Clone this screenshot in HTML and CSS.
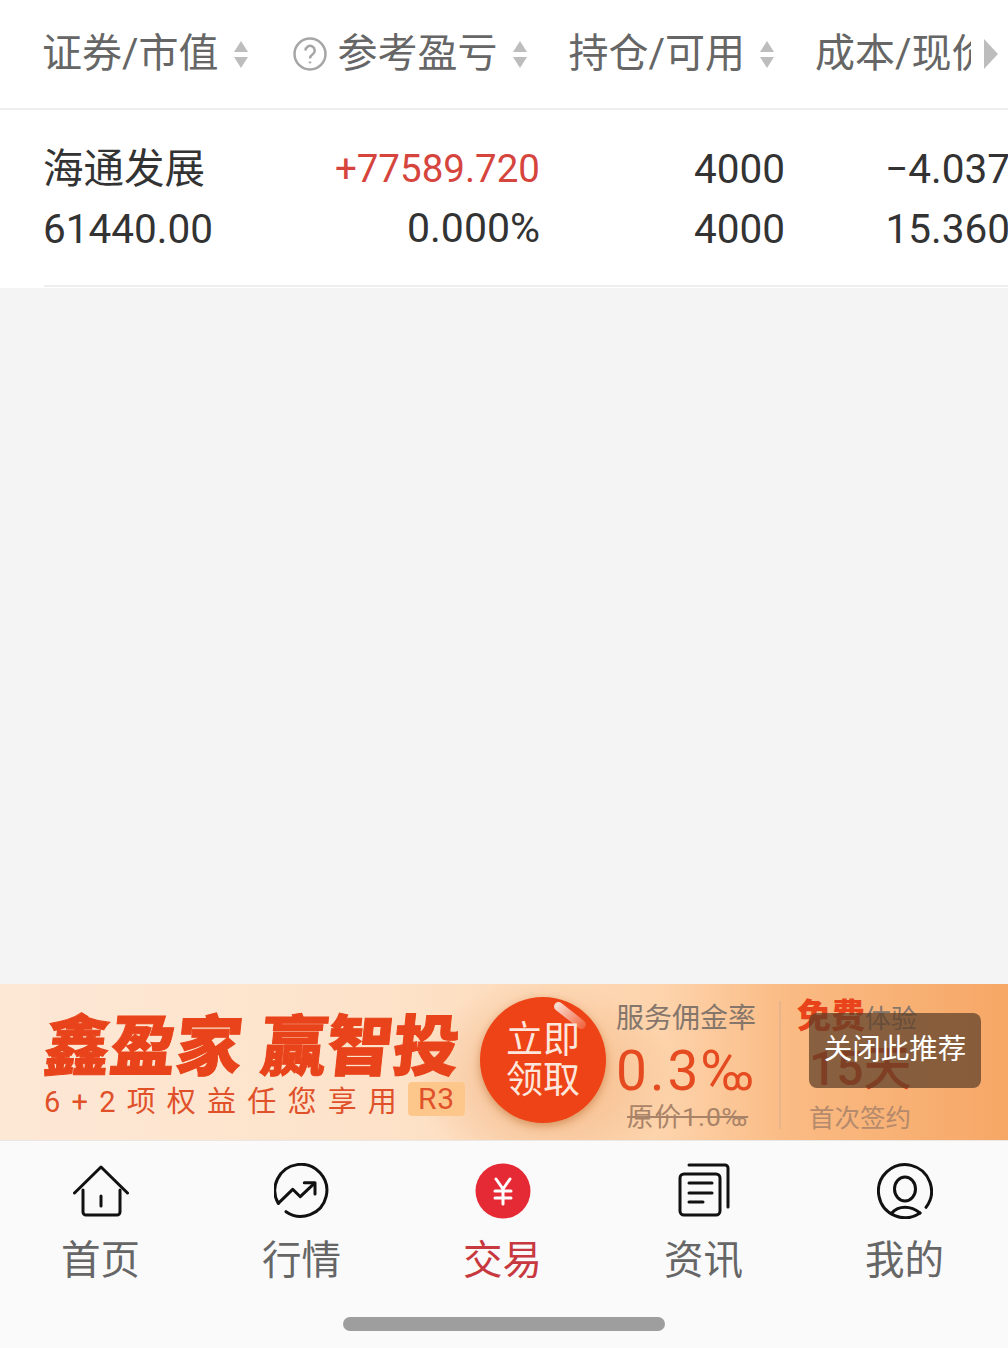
FILE: index.html
```html
<!DOCTYPE html>
<html>
    <head>
        <title>持仓</title>
        <link rel="stylesheet" href="styles.css">
    </head>
    <body>
        <div class="page">
            <div class="table_head">
                <div class="th th_name">
                    <span class="th_label">证券/市值</span>
                    <span class="sort"><i class="up"></i><i class="down"></i></span>
                </div>
                <div class="th th_profit">
                    <svg class="help" viewBox="0 0 34 34">
                        <circle cx="17" cy="17" r="15.5" />
                        <path d="M12.5 13.5 a4.6 4.6 0 1 1 7.2 3.8 c-1.800 1.200 -2.700 2.200 -2.700 4.200" />
                        <path d="M17 24.500 v1.800" />
                    </svg>
                    <span class="th_label">参考盈亏</span>
                    <span class="sort"><i class="up"></i><i class="down"></i></span>
                </div>
                <div class="th th_hold">
                    <span class="th_label">持仓/可用</span>
                    <span class="sort"><i class="up"></i><i class="down"></i></span>
                </div>
                <div class="th th_cost">
                    <span class="th_label th_clip">成本/现价</span>
                    <i class="more"></i>
                </div>
            </div>

            <div class="row">
                <div class="row_grid">
                    <div class="cell">
                        <div class="line">海通发展</div>
                        <div class="line">61440.00</div>
                    </div>
                    <div class="cell num">
                        <div class="line up_value">+77589.720</div>
                        <div class="line pct">0.000%</div>
                    </div>
                    <div class="cell num">
                        <div class="line">4000</div>
                        <div class="line">4000</div>
                    </div>
                    <div class="cell num">
                        <div class="line">−4.037</div>
                        <div class="line">15.360</div>
                    </div>
                </div>
                <div class="row_rule"></div>
            </div>

            <div class="blank"></div>

            <div class="banner">
                <div class="promo">
                    <div class="promo_title">
                        <span>鑫盈家</span>
                        <span>赢智投</span>
                    </div>
                    <div class="promo_sub">
                        <span>6+2项权益任您享用</span>
                        <span class="risk">R3</span>
                    </div>
                </div>
                <div class="claim">
                    <span>立即</span>
                    <span>领取</span>
                    <i class="claim_shine"></i>
                </div>
                <div class="rate">
                    <div class="rate_title">服务佣金率</div>
                    <div class="rate_value">0.3‰</div>
                    <div class="rate_old">原价1.0‰</div>
                </div>
                <div class="banner_rule"></div>
                <div class="trial">
                    <div class="trial_title"><b>免费</b>体验</div>
                    <div class="trial_value">15天</div>
                    <div class="trial_note">首次签约</div>
                </div>
                <div class="close_tip">关闭此推荐</div>
            </div>

            <div class="tabbar">
                <div class="tabs">
                    <div class="tab">
                        <svg class="tab_icon" viewBox="0 0 56 56">
                            <path d="M1.500 30 L28 4 L54.500 30" />
                            <path d="M10 27 V49 a3 3 0 0 0 3 3 H44 a3 3 0 0 0 3 -3 V27" />
                            <path d="M28 33 V43" />
                        </svg>
                        <span>首页</span>
                    </div>
                    <div class="tab">
                        <svg class="tab_icon" viewBox="0 0 56 56">
                            <path d="M12 48.700 A26 26 0 1 0 4.300 40.300" />
                            <path d="M4.300 40.300 L18.700 26.300 L26.300 33.700 L40.300 20.300" />
                            <path d="M30.300 19.700 H41 V31" />
                        </svg>
                        <span>行情</span>
                    </div>
                    <div class="tab tab_on">
                        <svg class="tab_icon" viewBox="0 0 56 56">
                            <circle class="yuan_bg" cx="28" cy="28" r="27.500" />
                            <path class="yuan" d="M21 16 L28 26 L35 16 M20 28 H36 M20 35 H36 M28 26 V41" />
                        </svg>
                        <span>交易</span>
                    </div>
                    <div class="tab">
                        <svg class="tab_icon" viewBox="0 0 56 56">
                            <rect x="4" y="11" width="40" height="41" rx="4" />
                            <path d="M13 2 H49 a3 3 0 0 1 3 3 V44" />
                            <path d="M13 20 H36 M13 30 H36 M13 39 H27" />
                        </svg>
                        <span>资讯</span>
                    </div>
                    <div class="tab">
                        <svg class="tab_icon" viewBox="0 0 56 56">
                            <path d="M43 50 A26.500 26.500 0 1 1 49 44.300" />
                            <ellipse cx="28" cy="26" rx="10.500" ry="12" />
                            <path d="M14.700 50 Q20 44.300 28 44.300 T43 50" />
                        </svg>
                        <span>我的</span>
                    </div>
                </div>
                <div class="home_bar"></div>
            </div>
        </div>
    </body>
</html>
```

FILE: styles.css
```css
* {
    box-sizing: border-box;
}

body {
    margin: 0;
    font-family: Roboto, "Noto Sans CJK SC", sans-serif;
    background-color: #f4f4f4;
}

.page {
    display: flex;
    flex-direction: column;
    height: 100vh;
    overflow: hidden;
}

/* table head */

.table_head {
    display: flex;
    align-items: center;
    flex: none;
    height: 110px;
    padding-left: 42px;
    background-color: #fff;
    border-bottom: 2px solid #eeeeee;
    color: #666;
    font-size: 40px;
    white-space: nowrap;
}

.th {
    display: flex;
    align-items: center;
    flex: none;
}

.th_label {
    line-height: 44px;
}

.th_profit {
    margin-left: 45px;
}

.th_hold {
    margin-left: 42px;
}

.th_cost {
    margin-left: 41px;
}

.th_clip {
    display: block;
    width: 156px;
    overflow: hidden;
}

.help {
    width: 34px;
    height: 34px;
    margin-right: 11px;
    fill: none;
    stroke: #a6a6a6;
    stroke-width: 2.500;
}

.sort {
    display: flex;
    flex-direction: column;
    gap: 5px;
    margin-left: 15px;
}

.sort i {
    display: block;
    width: 0;
    height: 0;
    border-left: 7px solid transparent;
    border-right: 7px solid transparent;
}

.sort .up {
    border-bottom: 11px solid #bdbdbd;
}

.sort .down {
    border-top: 11px solid #bdbdbd;
}

.more {
    display: block;
    width: 0;
    height: 0;
    margin-left: 13px;
    border-top: 15px solid transparent;
    border-bottom: 15px solid transparent;
    border-left: 14px solid #bdbdbd;
}

/* position row */

.row {
    flex: none;
    height: 178px;
    background-color: #fff;
    color: #333;
    font-size: 40.500px;
}

.row_grid {
    display: grid;
    grid-template-columns: 251px 246px 245px 225px;
    height: 175px;
    padding: 29px 0 0 43px;
    white-space: nowrap;
}

.line {
    height: 60px;
    line-height: 60px;
}

.num {
    text-align: right;
}

.up_value {
    color: #d6453d;
    font-size: 38.500px;
}

.pct {
    margin-top: -1px;
    font-size: 41px;
}

.row_rule {
    height: 2px;
    margin-left: 44px;
    background-color: #eeeeee;
}

.blank {
    flex: 1;
}

/* promo banner */

.banner {
    position: relative;
    display: flex;
    flex: none;
    height: 156px;
    background:
        radial-gradient(ellipse 130px 100px at 545px 95px, rgba(231, 140, 70, 0.45), rgba(231, 140, 70, 0) 100%),
        linear-gradient(90deg, #fde8d6 0%, #fde2c8 40%, #fdd3ab 66%, #fabb84 78%, #f6a766 100%);
}

.promo {
    flex: none;
    width: 480px;
    padding: 22px 0 0 41px;
    color: #e8431a;
}

.promo_title {
    display: flex;
    gap: 19px;
    height: 71px;
    font-size: 66px;
    font-weight: 900;
    line-height: 71px;
    font-family: "Noto Sans CJK SC", sans-serif;
    white-space: nowrap;
    -webkit-text-stroke: 1px #e8431a;
    transform: skewX(-6deg);
    transform-origin: left bottom;
}

.promo_sub {
    display: flex;
    align-items: center;
    margin: 1px 0 0 3px;
    font-size: 29px;
    letter-spacing: 11.200px;
    color: #e0512a;
    white-space: nowrap;
}

.risk {
    width: 57px;
    height: 34px;
    border-radius: 4px;
    background-color: #fdc78c;
    font-size: 30px;
    line-height: 34px;
    letter-spacing: 1px;
    text-align: center;
}

.claim {
    position: relative;
    display: flex;
    flex-direction: column;
    flex: none;
    align-items: center;
    justify-content: center;
    width: 126px;
    height: 126px;
    margin: 13px 0 0 0;
    padding-top: 2px;
    border-radius: 50%;
    background-color: #ee4316;
    box-shadow: 0 3px 8px rgba(176, 84, 20, 0.45);
    color: #fde6dc;
    font-size: 37px;
    line-height: 40px;
}

.claim_shine {
    position: absolute;
    top: 14px;
    right: 17px;
    width: 38px;
    height: 9px;
    border-radius: 5px;
    background: linear-gradient(90deg, #fbe2d8, rgba(251, 226, 216, 0.2));
    transform: rotate(38deg);
}

.rate {
    flex: none;
    width: 163px;
    margin-left: 10px;
    padding-top: 16px;
    white-space: nowrap;
}

.rate_title {
    height: 38px;
    color: #85766c;
    font-size: 28px;
    line-height: 38px;
}

.rate_value {
    height: 56px;
    margin-top: 5px;
    color: #e64a20;
    font-size: 55px;
    letter-spacing: 3px;
    line-height: 56px;
}

.rate_old {
    margin: 2px 0 0 11px;
    color: #a98368;
    font-size: 26.500px;
    letter-spacing: 1px;
    line-height: 32px;
    text-decoration: line-through;
}

.banner_rule {
    flex: none;
    width: 2px;
    height: 128px;
    margin-top: 17px;
    background-color: #e8b48c;
}

.trial {
    flex: none;
    margin-left: 16px;
    padding-top: 12px;
    white-space: nowrap;
}

.trial_title {
    height: 40px;
    color: #85766c;
    font-size: 26px;
    line-height: 40px;
}

.trial_title b {
    color: #e8431a;
    font-size: 34px;
    font-weight: 900;
}

.trial_value {
    height: 52px;
    margin: 7px 0 0 12px;
    color: #d8401a;
    font-size: 48px;
    font-weight: 500;
    line-height: 52px;
}

.trial_note {
    margin: 5px 0 0 12px;
    color: #b58a6c;
    font-size: 25.500px;
    line-height: 36px;
}

.close_tip {
    position: absolute;
    top: 29px;
    left: 809px;
    width: 172px;
    height: 75px;
    border-radius: 8px;
    background-color: rgba(92, 62, 40, 0.72);
    color: #fff;
    font-size: 28.500px;
    line-height: 74px;
    text-align: center;
}

/* bottom tabs */

.tabbar {
    display: flex;
    flex: none;
    flex-direction: column;
    height: 208px;
    background-color: #fafafa;
    border-top: 1px solid #ebe7e3;
}

.tabs {
    display: grid;
    grid-template-columns: repeat(5, 201px);
    padding-top: 22px;
}

.tab {
    display: flex;
    flex-direction: column;
    align-items: center;
    color: #666;
    font-size: 39.500px;
    line-height: 46px;
}

.tab span {
    margin-top: 19px;
}

.tab_icon {
    width: 56px;
    height: 56px;
    fill: none;
    stroke: #111;
    stroke-width: 3;
    stroke-linecap: round;
    stroke-linejoin: round;
}

.tab_on {
    color: #c8383f;
}

.yuan_bg {
    fill: #e62a35;
    stroke: none;
}

.yuan {
    stroke: #fff;
}

.home_bar {
    align-self: center;
    width: 322px;
    height: 14px;
    margin-top: 33px;
    border-radius: 7px;
    background-color: #9e9e9e;
}
```
